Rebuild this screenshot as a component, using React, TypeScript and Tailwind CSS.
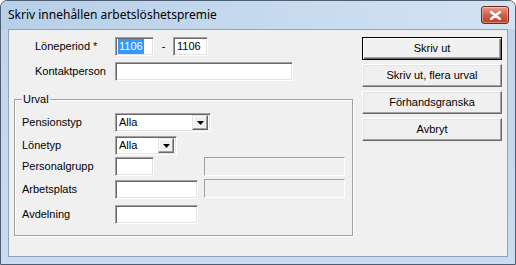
import React from "react";

const sunken =
  "border border-t-[#a0a0a0] border-l-[#a0a0a0] border-b-white border-r-white shadow-[inset_1px_1px_0_#696969,inset_-1px_-1px_0_#e3e3e3] bg-white";
const staticEdge =
  "border border-t-[#a0a0a0] border-l-[#a0a0a0] border-b-white border-r-white bg-[#f0f0f0]";

function Input({ w, children }: { w: string; children?: React.ReactNode }) {
  return (
    <div className={`${sunken} ${w} h-[19px] flex items-center pl-[3px] overflow-hidden`}>
      {children}
    </div>
  );
}

function Select({ w, value }: { w: string; value: string }) {
  return (
    <div className={`${sunken} ${w} h-[19px] flex items-center justify-between pl-[3px] pr-[2px]`}>
      <span>{value}</span>
      <div className="w-[16px] h-[15px] bg-[#f0f0f0] border border-t-[#e3e3e3] border-l-[#e3e3e3] border-b-[#696969] border-r-[#696969] shadow-[inset_-1px_-1px_0_#a0a0a0,inset_1px_1px_0_#fff] flex items-center justify-center">
        <svg width="7" height="4" viewBox="0 0 7 4">
          <path d="M0 0h7L3.5 4z" fill="#000" />
        </svg>
      </div>
    </div>
  );
}

function Button({ label, def }: { label: string; def?: boolean }) {
  return (
    <div
      className={`h-[23px] w-[140px] flex items-center justify-center bg-[#f0f0f0] ${
        def
          ? "border border-black shadow-[inset_1px_1px_0_#fff,inset_-1px_-1px_0_#696969,inset_-2px_-2px_0_#a0a0a0]"
          : "border border-t-white border-l-white border-b-[#696969] border-r-[#696969] shadow-[inset_-1px_-1px_0_#a0a0a0,inset_1px_1px_0_#e3e3e3]"
      }`}
    >
      {label}
    </div>
  );
}

export default function App() {
  return (
    <div className="w-[516px] h-[265px] flex flex-col border border-[#4d5d72] rounded-t-[7px] bg-[linear-gradient(to_bottom,#bfd4ea,#c9dcf0)] overflow-hidden">
      <div className="h-[28px] flex items-center justify-between pl-[7px] pr-[6px] bg-[linear-gradient(to_right,#b7cfe8,#c8dbef_60%,#d4e3f3)]">
        <span className="text-[12px] text-black" style={{ fontFamily: '"Noto Sans", "Open Sans", sans-serif' }}>
          Skriv innehållen arbetslöshetspremie
        </span>
        <div className="w-[28px] h-[18px] rounded-[3px] border border-[#6d2a22] bg-[linear-gradient(to_bottom,#e5a08f,#d05f48_50%,#bf3f27)] flex items-center justify-center shadow-[inset_0_0_0_1px_rgba(255,255,255,0.35)]">
          <svg width="11" height="9" viewBox="0 0 11 9">
            <path d="M1 1L10 8M10 1L1 8" stroke="#fff" strokeWidth="2.6" strokeLinecap="round" />
          </svg>
        </div>
      </div>
      <div
        className="flex-1 mx-[7px] mb-[7px] border border-[#8ea4bd] bg-[#f0f0f0] flex text-[11px] text-black leading-none"
        style={{ fontFamily: '"Liberation Sans", Arial, sans-serif' }}
      >
        <div className="w-[353px] flex flex-col">
          <div className="mt-[7px] ml-[26px] flex items-center h-[19px]">
            <span className="w-[80px]">Löneperiod *</span>
            <div className={`${sunken} w-[39px] h-[19px] flex items-center pl-[2px]`}>
              <span className="bg-[#3399ff] text-white px-[1px] py-[2px]">1106</span>
            </div>
            <span className="w-[19px] text-center">-</span>
            <Input w="w-[35px]">1106</Input>
          </div>
          <div className="mt-[6px] ml-[26px] flex items-center h-[19px]">
            <span className="w-[80px]">Kontaktperson</span>
            <Input w="w-[178px]" />
          </div>
          <div className="relative mt-[18px] ml-[5px] w-[339px] h-[137px] border border-[#a0a0a0] shadow-[inset_1px_1px_0_#fff,1px_1px_0_#fff]">
            <span className="absolute -top-[6px] left-[7px] bg-[#f0f0f0] px-[1px]">Urval</span>
            <div className="mt-[13px] ml-[7px] flex flex-col">
              <div className="flex items-center h-[19px]">
                <span className="w-[93px]">Pensionstyp</span>
                <Select w="w-[96px]" value="Alla" />
              </div>
              <div className="mt-[4px] flex items-center h-[19px]">
                <span className="w-[93px]">Lönetyp</span>
                <Select w="w-[62px]" value="Alla" />
              </div>
              <div className="mt-[2px] flex items-center h-[19px]">
                <span className="w-[93px]">Personalgrupp</span>
                <Input w="w-[39px]" />
                <div className={`${staticEdge} ml-[50px] w-[141px] h-[19px]`} />
              </div>
              <div className="mt-[4px] flex items-center h-[19px]">
                <span className="w-[93px]">Arbetsplats</span>
                <Input w="w-[83px]" />
                <div className={`${staticEdge} ml-[6px] w-[141px] h-[19px] -mt-[2px]`} />
              </div>
              <div className="mt-[6px] flex items-center h-[19px]">
                <span className="w-[93px]">Avdelning</span>
                <Input w="w-[83px]" />
              </div>
            </div>
          </div>
        </div>
        <div className="mt-[7px] flex flex-col gap-[4px]">
          <Button label="Skriv ut" def />
          <Button label="Skriv ut, flera urval" />
          <Button label="Förhandsgranska" />
          <Button label="Avbryt" />
        </div>
      </div>
    </div>
  );
}
